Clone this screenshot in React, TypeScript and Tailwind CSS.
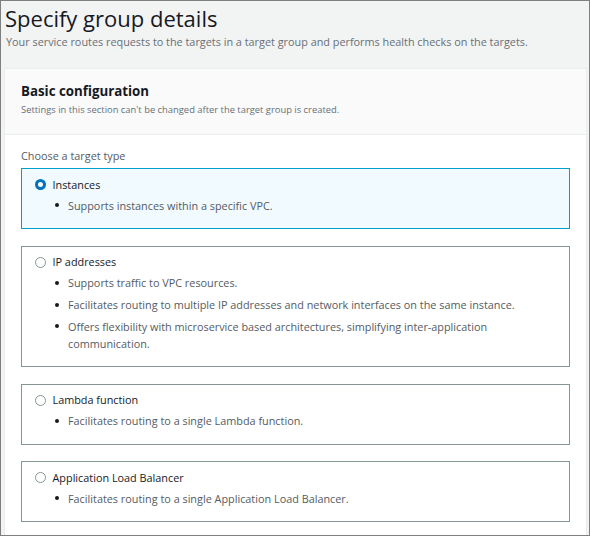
import React from "react";

type Tile = { label: string; bullets: string[]; selected?: boolean };

const tiles: Tile[] = [
  { label: "Instances", bullets: ["Supports instances within a specific VPC."], selected: true },
  {
    label: "IP addresses",
    bullets: [
      "Supports traffic to VPC resources.",
      "Facilitates routing to multiple IP addresses and network interfaces on the same instance.",
      "Offers flexibility with microservice based architectures, simplifying inter-application communication.",
    ],
  },
  { label: "Lambda function", bullets: ["Facilitates routing to a single Lambda function."] },
  { label: "Application Load Balancer", bullets: ["Facilitates routing to a single Application Load Balancer."] },
];

function Radio({ selected }: { selected?: boolean }) {
  return selected ? (
    <span className="block w-[11px] h-[11px] shrink-0 rounded-full border-[3.5px] border-[#0073bb] bg-white" />
  ) : (
    <span className="block w-[11px] h-[11px] shrink-0 rounded-full border border-[#879596] bg-white" />
  );
}

function TileCard({ tile }: { tile: Tile }) {
  return (
    <div
      className={
        tile.selected
          ? "border border-[#00a1c9] bg-[#f1faff] pl-[13px] pr-[14px] pt-[6.6px] pb-[14.6px]"
          : "border border-[#879596] bg-white pl-[13px] pr-[14px] pt-[6.6px] pb-[14.6px]"
      }
    >
      <div className="flex items-center h-[17px]">
        <span className="mt-[1px]">
          <Radio selected={tile.selected} />
        </span>
        <span className="ml-[6.5px] text-[10.85px] leading-[17px] text-[#16191f]">{tile.label}</span>
      </div>
      <ul className="mt-[4px] pl-[20px] flex flex-col gap-[4.7px]">
        {tile.bullets.map((b) => (
          <li key={b} className="flex items-start">
            <span className="block w-[4px] h-[4px] mt-[6.5px] rounded-full bg-[#16191f] shrink-0" />
            <span className="ml-[9px] text-[10.85px] leading-[17px] text-[#545b64]">{b}</span>
          </li>
        ))}
      </ul>
    </div>
  );
}

export default function App() {
  return (
    <div className="w-[590px] h-[536px] overflow-hidden border border-[#7f7f7f] bg-[#f2f3f3] font-['Open_Sans',sans-serif]">
      <div className="pl-[4px] pt-[2.5px]">
        <h1 className="text-[22px] leading-[28px] text-[#16191f] font-normal">Specify group details</h1>
        <p className="mt-[2.5px] pl-[1px] text-[10.85px] leading-[16px] text-[#687078]">
          Your service routes requests to the targets in a target group and performs health checks on the targets.
        </p>
      </div>
      <div className="mt-[18px] ml-[3px] mr-[2px] border border-[#eaeded] bg-white">
        <div className="bg-[#fafafa] border-b border-[#eaeded] px-[16px] pt-[13.3px] pb-[17.3px]">
          <h2 className="text-[13.3px] leading-[18px] font-bold text-[#16191f]">Basic configuration</h2>
          <p className="mt-[2.4px] text-[9.4px] leading-[14px] text-[#687078]">
            Settings in this section can't be changed after the target group is created.
          </p>
        </div>
        <div className="px-[16px] pt-[12.3px] pb-[16px]">
          <div className="text-[10.85px] leading-[17px] text-[#545b64]">Choose a target type</div>
          <div className="mt-[4px] flex flex-col gap-[16.3px]">
            {tiles.map((t) => (
              <TileCard key={t.label} tile={t} />
            ))}
          </div>
        </div>
      </div>
    </div>
  );
}
